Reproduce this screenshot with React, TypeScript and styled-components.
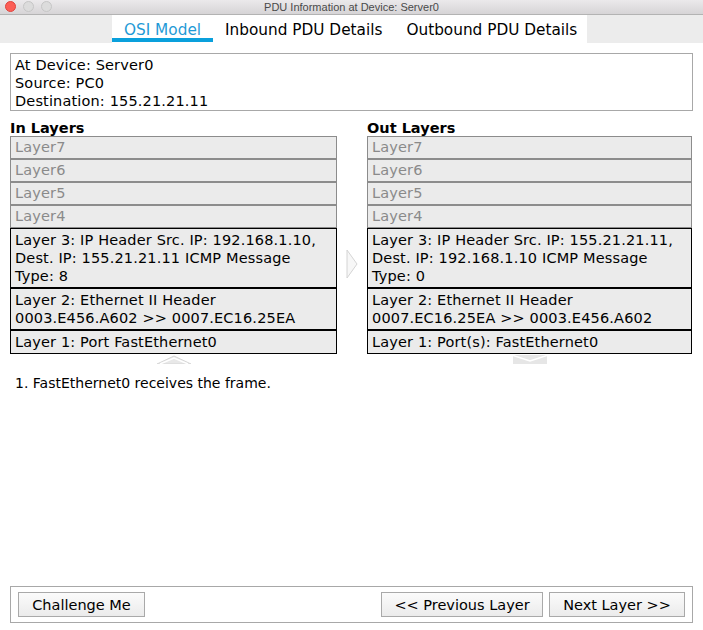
import React from "react";
import styled, { createGlobalStyle } from "styled-components";

const Global = createGlobalStyle`
  html, body { margin: 0; padding: 0; background: #ffffff; }
  body { font-family: "DejaVu Sans", Verdana, sans-serif; color: #000; }
  * { box-sizing: border-box; }
`;

const Window = styled.div`
  width: 703px;
  height: 630px;
  display: flex;
  flex-direction: column;
  background: #fff;
  overflow: hidden;
`;

const TitleBar = styled.div`
  height: 15px;
  flex: none;
  position: relative;
  display: flex;
  align-items: center;
  justify-content: center;
  background: linear-gradient(#ebe9eb, #d6d4d6);
  border-bottom: 1px solid #b3b3b3;
`;

const Lights = styled.div`
  position: absolute;
  left: 5px;
  top: 1px;
  display: flex;
  gap: 7px;
`;

const Light = styled.span<{ $color: string; $edge: string }>`
  width: 11px;
  height: 11px;
  border-radius: 50%;
  background: ${(p) => p.$color};
  border: 1px solid ${(p) => p.$edge};
`;

const Title = styled.div`
  font-family: "Liberation Sans", Arial, sans-serif;
  font-size: 11px;
  line-height: 14px;
  color: #4a4a4a;
`;

const TabStrip = styled.div`
  height: 28px;
  flex: none;
  background: #ececec;
  padding-left: 112px;
  display: flex;
`;

const Tabs = styled.div`
  width: 475px;
  height: 28px;
  background: #fff;
  display: flex;
`;

const Tab = styled.div<{ $active?: boolean }>`
  height: 27px;
  padding: 6px 12px 0;
  font-size: 15.3px;
  line-height: 18px;
  color: ${(p) => (p.$active ? "#1f9ad6" : "#000")};
  border-bottom: ${(p) => (p.$active ? "4px solid #0aa0dc" : "none")};
  margin-bottom: 1px;
  white-space: nowrap;
`;

const Body = styled.div`
  flex: 1;
  display: flex;
  flex-direction: column;
  padding: 10px 10px 7px;
  font-size: 14.5px;
  letter-spacing: 0.15px;
  line-height: 18px;
`;

const InfoBox = styled.div`
  border: 1px solid #a8a8a8;
  padding: 2px 4px 0;
`;

const Columns = styled.div`
  display: grid;
  grid-template-columns: 327px 30px 325px;
  margin-top: 8px;
`;

const Column = styled.div`
  display: flex;
  flex-direction: column;
`;

const Heading = styled.div`
  font-weight: bold;
  font-size: 14.5px;
  letter-spacing: 0;
  line-height: 17px;
  padding-top: 1px;
  height: 17px;
  overflow: visible;
`;

const LayerBox = styled.div<{ $active?: boolean }>`
  border: 1px solid ${(p) => (p.$active ? "#000" : "#8c8c8c")};
  background: #ebebeb;
  color: ${(p) => (p.$active ? "#000" : "#8a8a8a")};
  padding: ${(p) => (p.$active ? "2px 4px 2px" : "1px 4px 2px")};
  white-space: pre-line;
`;

const Middle = styled.div`
  display: flex;
  justify-content: center;
  padding-top: 130px;
`;

const Indicator = styled.div`
  display: flex;
  justify-content: center;
  height: 11px;
  align-items: center;
`;

const Message = styled.div`
  margin-top: 9px;
  padding-left: 5px;
  font-size: 14px;
  letter-spacing: 0;
`;

const BottomPanel = styled.div`
  margin-top: auto;
  border: 1px solid #a8a8a8;
  height: 37px;
  padding: 5px 7px;
  display: flex;
  align-items: flex-start;
`;

const ButtonGroup = styled.div`
  margin-left: auto;
  display: flex;
  gap: 6px;
`;

const Button = styled.button<{ $w: number }>`
  width: ${(p) => p.$w}px;
  height: 25px;
  border: 1px solid #a9a9a9;
  background: linear-gradient(#fbfbfb, #ebebeb);
  font-family: "DejaVu Sans", Verdana, sans-serif;
  font-size: 14.5px;
  color: #000;
  padding: 0;
  line-height: 22px;
`;

const inLayers = [
  { text: "Layer7" },
  { text: "Layer6" },
  { text: "Layer5" },
  { text: "Layer4" },
  {
    text: "Layer 3: IP Header Src. IP: 192.168.1.10,\nDest. IP: 155.21.21.11 ICMP Message\nType: 8",
    active: true,
  },
  { text: "Layer 2: Ethernet II Header\n0003.E456.A602 >> 0007.EC16.25EA", active: true },
  { text: "Layer 1: Port FastEthernet0", active: true },
];

const outLayers = [
  { text: "Layer7" },
  { text: "Layer6" },
  { text: "Layer5" },
  { text: "Layer4" },
  {
    text: "Layer 3: IP Header Src. IP: 155.21.21.11,\nDest. IP: 192.168.1.10 ICMP Message\nType: 0",
    active: true,
  },
  { text: "Layer 2: Ethernet II Header\n0007.EC16.25EA >> 0003.E456.A602", active: true },
  { text: "Layer 1: Port(s): FastEthernet0", active: true },
];

const UpMark = () => (
  <svg width="34" height="9" viewBox="0 0 34 9">
    <polygon points="0,9 17,1 34,9" fill="#e8e8e8" stroke="#d6d6d6" strokeWidth="1" />
    <polyline points="3,9 17,3 31,9" fill="none" stroke="#ffffff" strokeWidth="1.5" />
  </svg>
);

const DownMark = () => (
  <svg width="34" height="9" viewBox="0 0 34 9">
    <rect x="0" y="0" width="34" height="9" fill="#e6e6e6" />
    <polyline points="0,0.5 17,6 34,0.5" fill="none" stroke="#ffffff" strokeWidth="1.6" />
  </svg>
);

const RightArrow = () => (
  <svg width="14" height="30" viewBox="0 0 14 30">
    <polygon points="2,1 12,15 2,29" fill="#f7f7f7" stroke="#d4d4d4" strokeWidth="1" />
  </svg>
);

export default function App() {
  return (
    <>
      <Global />
      <Window>
        <TitleBar>
          <Lights>
            <Light $color="#fc5f57" $edge="#e0443e" />
            <Light $color="#dcdcdc" $edge="#c6c6c6" />
            <Light $color="#dcdcdc" $edge="#c6c6c6" />
          </Lights>
          <Title>PDU Information at Device: Server0</Title>
        </TitleBar>
        <TabStrip>
          <Tabs>
            <Tab $active>OSI Model</Tab>
            <Tab>Inbound PDU Details</Tab>
            <Tab>Outbound PDU Details</Tab>
          </Tabs>
        </TabStrip>
        <Body>
          <InfoBox>
            <div>At Device: Server0</div>
            <div>Source: PC0</div>
            <div>Destination: 155.21.21.11</div>
          </InfoBox>
          <Columns>
            <Column>
              <Heading>In Layers</Heading>
              {inLayers.map((l, i) => (
                <LayerBox key={i} $active={l.active}>
                  {l.text}
                </LayerBox>
              ))}
              <Indicator>
                <UpMark />
              </Indicator>
            </Column>
            <Middle>
              <RightArrow />
            </Middle>
            <Column>
              <Heading>Out Layers</Heading>
              {outLayers.map((l, i) => (
                <LayerBox key={i} $active={l.active}>
                  {l.text}
                </LayerBox>
              ))}
              <Indicator>
                <DownMark />
              </Indicator>
            </Column>
          </Columns>
          <Message>1. FastEthernet0 receives the frame.</Message>
          <BottomPanel>
            <Button $w={127}>Challenge Me</Button>
            <ButtonGroup>
              <Button $w={162}>&lt;&lt; Previous Layer</Button>
              <Button $w={136}>Next Layer &gt;&gt;</Button>
            </ButtonGroup>
          </BottomPanel>
        </Body>
      </Window>
    </>
  );
}
